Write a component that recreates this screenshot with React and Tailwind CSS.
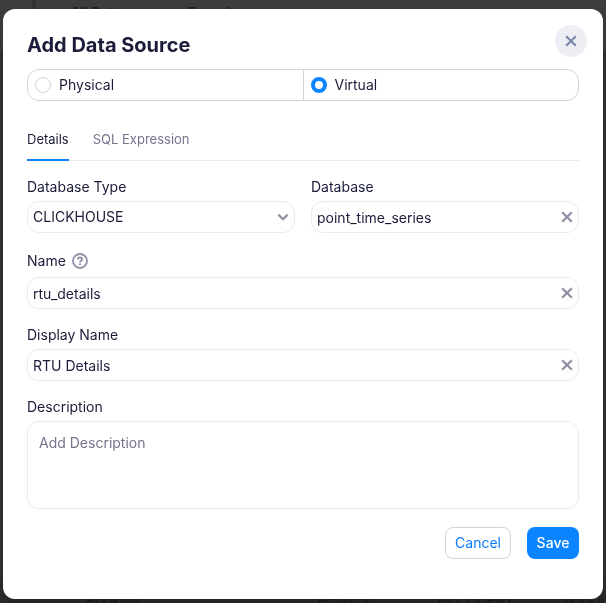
import React, { useState } from 'react';

const emptyRows = Array.from({ length: 12 }, (_, index) => index);

function CloseIcon() {
  return (
    <svg viewBox="0 0 16 16" className="h-4 w-4" fill="none" stroke="currentColor" strokeWidth="2.2">
      <path d="M3.2 3.2l9.6 9.6M12.8 3.2l-9.6 9.6" />
    </svg>
  );
}

function ChevronIcon() {
  return (
    <svg
      viewBox="0 0 16 16"
      className="pointer-events-none absolute top-2 right-1 h-4 w-4 text-[#8f90a6]"
      fill="none"
      stroke="currentColor"
      strokeWidth="2.2"
    >
      <path d="M3.4 5.6L8 10.2l4.6-4.6" />
    </svg>
  );
}

function HelpIcon() {
  return (
    <svg
      viewBox="0 0 16 16"
      className="h-4 w-4 text-[#8f90a6]"
      fill="none"
      stroke="currentColor"
      strokeWidth="1.8"
    >
      <circle cx="8" cy="8" r="7" />
      <path d="M5.9 6.6c0-1.3.9-2.1 2.1-2.1s2.1.8 2.1 1.9c0 1.4-2.1 1.5-2.1 3.1" />
      <path d="M8 10.5v1.8" />
    </svg>
  );
}

/**
 * Dimmed data source list that sits behind the dialog
 */
function SourceList() {
  return (
    <div
      aria-hidden="true"
      className="fixed inset-0 overflow-hidden bg-[#3d3d3d] text-sm text-[#1c1c1f]"
    >
      <div className="flex h-full flex-col">
        <div className="flex h-[51px] shrink-0 pl-8 leading-5">
          <div className="w-1 bg-[#333333]" />
          <span className="w-[118px] pt-[3px] pl-[34px] box-content font-bold">All Data</span>
          <span className="pt-[3px] font-semibold">Favorite</span>
        </div>
        {emptyRows.map((row) => (
          <div key={row} className="h-11 shrink-0 border-b border-[#292b2b] bg-[#323434]" />
        ))}
        <div className="flex h-11 shrink-0 items-center bg-[#2c2e2e] pl-[86px] whitespace-nowrap">
          <span className="w-[231px] shrink-0">Booking</span>
          <span className="w-[120px] shrink-0">Physical</span>
          <span className="w-[127px] shrink-0">BIG_QUERY</span>
          <span>booking</span>
        </div>
      </div>
    </div>
  );
}

function SourceTypeOption({ label, checked, onSelect }) {
  return (
    <label className="flex flex-1 items-center gap-2 pl-[7px] text-sm">
      <input
        type="radio"
        name="sourceType"
        checked={checked}
        onChange={onSelect}
        className="h-4 w-4 appearance-none rounded-full border border-[#d4d4d8] bg-white checked:border-4 checked:border-[#0a84ff]"
      />
      {label}
    </label>
  );
}

function TextField({ id, label, help, value, onChange }) {
  return (
    <div>
      <div className={`flex items-center gap-[6px] text-sm ${help ? 'h-6' : 'h-5'}`}>
        <label htmlFor={id}>{label}</label>
        {help && <HelpIcon />}
      </div>
      <div className="mt-1 flex h-8 items-center rounded-xl border border-[#ebebed] pr-[3px] pl-[5px]">
        <input
          id={id}
          type="text"
          value={value}
          onChange={(e) => onChange(e.target.value)}
          className="min-w-0 flex-1 pt-px text-sm outline-none"
        />
        <button
          type="button"
          aria-label={`Clear ${label}`}
          onClick={() => onChange('')}
          className="text-[#8f90a6]"
        >
          <CloseIcon />
        </button>
      </div>
    </div>
  );
}

/**
 * Dialog for adding a physical or virtual data source
 */
export default function App() {
  const [sourceType, setSourceType] = useState('virtual');
  const [activeTab, setActiveTab] = useState('Details');
  const [database, setDatabase] = useState('point_time_series');
  const [name, setName] = useState('rtu_details');
  const [displayName, setDisplayName] = useState('RTU Details');
  const [description, setDescription] = useState('');

  return (
    <div className="font-['Inter',sans-serif] text-[#1b1c3a]">
      <SourceList />

      <div className="relative px-[3px] pt-[9px] pb-1">
        <div
          role="dialog"
          aria-labelledby="dialog-title"
          className="relative mx-auto max-w-[600px] rounded-xl bg-white px-6 pt-6 pb-10 shadow-[0_8px_12px_rgba(0,0,0,0.2)]"
        >
          <button
            type="button"
            aria-label="Close"
            className="absolute top-4 right-4 flex h-8 w-8 items-center justify-center rounded-full bg-[#eeeff4] text-[#7b87ad]"
          >
            <CloseIcon />
          </button>

          <h1 id="dialog-title" className="text-xl leading-6 font-bold">
            Add Data Source
          </h1>

          {/* Source type */}
          <div className="mt-3 flex h-8 divide-x divide-[#d4d4d8] rounded-xl border border-[#d4d4d8]">
            <SourceTypeOption
              label="Physical"
              checked={sourceType === 'physical'}
              onSelect={() => setSourceType('physical')}
            />
            <SourceTypeOption
              label="Virtual"
              checked={sourceType === 'virtual'}
              onSelect={() => setSourceType('virtual')}
            />
          </div>

          {/* Tabs */}
          <div role="tablist" className="mt-4 flex h-11 gap-6 border-b border-[#ebebed] text-[13px]">
            {['Details', 'SQL Expression'].map((tab) => (
              <button
                key={tab}
                type="button"
                role="tab"
                aria-selected={activeTab === tab}
                onClick={() => setActiveTab(tab)}
                className={`-mb-px border-b-2 pt-1 ${
                  activeTab === tab ? 'border-[#0a84ff]' : 'border-transparent text-[#74758c]'
                }`}
              >
                {tab}
              </button>
            ))}
          </div>

          {/* Form */}
          <form className="mt-4 space-y-4" onSubmit={(e) => e.preventDefault()}>
            <div className="grid grid-cols-2 gap-4">
              <div>
                <label htmlFor="database-type" className="block text-sm leading-5">
                  Database Type
                </label>
                <div className="relative mt-1">
                  <select
                    id="database-type"
                    className="h-8 w-full appearance-none rounded-xl border border-[#ebebed] bg-white pr-8 pl-[5px] text-sm"
                  >
                    <option>CLICKHOUSE</option>
                  </select>
                  <ChevronIcon />
                </div>
              </div>
              <TextField id="database" label="Database" value={database} onChange={setDatabase} />
            </div>

            <TextField id="name" label="Name" help value={name} onChange={setName} />
            <TextField
              id="display-name"
              label="Display Name"
              value={displayName}
              onChange={setDisplayName}
            />

            <div>
              <label htmlFor="description" className="block text-sm leading-5">
                Description
              </label>
              <textarea
                id="description"
                placeholder="Add Description"
                value={description}
                onChange={(e) => setDescription(e.target.value)}
                className="mt-1 block h-[88px] w-full resize-none rounded-xl border border-[#ebebed] px-[11px] py-[11px] text-sm placeholder:text-[#74758c]"
              />
            </div>

            <div className="flex justify-end gap-4 pt-[2px] text-sm">
              <button
                type="button"
                className="h-8 rounded-lg border border-[#d4d4d8] px-[9px] text-[#0a7cff]"
              >
                Cancel
              </button>
              <button
                type="submit"
                className="h-8 min-w-[52px] rounded-lg bg-[#0a84ff] px-[9px] font-medium text-white"
              >
                Save
              </button>
            </div>
          </form>
        </div>
      </div>
    </div>
  );
}
